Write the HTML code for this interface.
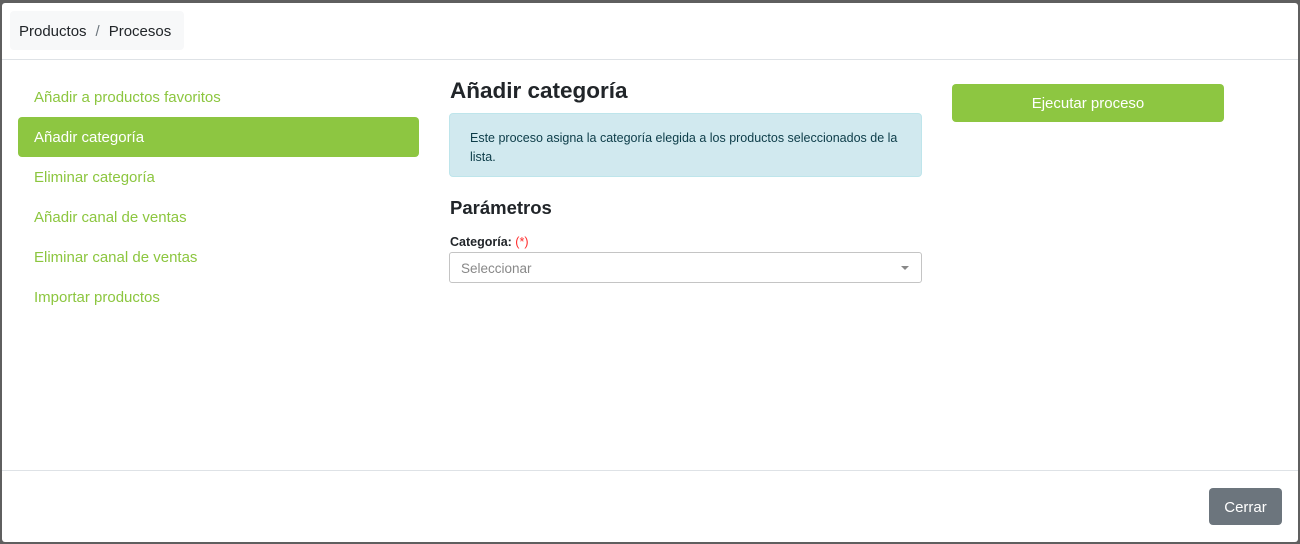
<!DOCTYPE html>
<html><head><meta charset="utf-8"><style>
*{box-sizing:border-box;margin:0;padding:0}
body{width:1300px;height:544px;background:#5f5f5f;font-family:"Liberation Sans",sans-serif;position:relative;overflow:hidden}
.modal{position:absolute;left:2px;top:3px;width:1296px;height:539px;background:#fff;border-radius:3px}
.hdr{position:absolute;left:0;top:0;width:100%;height:57px;border-bottom:1px solid #dee2e6}
.bc{position:absolute;left:8px;top:8px;height:39px;width:174px;background:#f7f8f9;border-radius:4px;font-size:15px;color:#212529;line-height:42px;padding-left:9px}
.bc span{color:#6c757d;margin:0 9px}
.nav{position:absolute;left:16px;top:74px;width:401px}
.nav div{height:40px;line-height:42px;padding-left:16px;font-size:15px;color:#8cc63f}
.nav div.act{background:#8dc641;color:#fff;border-radius:4px}
h2{position:absolute;left:448px;top:75px;font-size:22.5px;font-weight:bold;color:#212529}
.info{position:absolute;left:447px;top:110px;width:473px;height:64px;background:#d1e9ef;border:1px solid #bee5eb;border-radius:4px;font-size:12.5px;color:#0c3c48;padding:15px 20px;line-height:19px}
h3{position:absolute;left:448px;top:194px;font-size:18.5px;font-weight:bold;color:#212529}
.lbl{position:absolute;left:448px;top:232px;font-size:12.5px;font-weight:bold;color:#212529}
.lbl span{color:#ff2b2b;font-weight:normal}
.sel{position:absolute;left:447px;top:249px;width:473px;height:31px;border:1px solid #c4c4c4;border-radius:3px;font-size:13.5px;color:#888;line-height:32px;padding-left:11px}
.sel i{position:absolute;right:12px;top:13px;border-left:4px solid transparent;border-right:4px solid transparent;border-top:4px solid #888}
.run{position:absolute;left:950px;top:81px;width:272px;height:38px;background:#8dc641;border-radius:4px;color:#fff;font-size:15px;text-align:center;line-height:40px}
.ftr{position:absolute;left:0;top:467px;width:100%;border-top:1px solid #dee2e6}
.close{position:absolute;left:1207px;top:485px;width:73px;height:37px;background:#6c757d;border-radius:4px;color:#fff;font-size:15px;text-align:center;line-height:39px}
</style></head><body>
<div class="modal">
<div class="hdr"><div class="bc">Productos<span>/</span>Procesos</div></div>
<div class="nav">
<div>Añadir a productos favoritos</div>
<div class="act">Añadir categoría</div>
<div>Eliminar categoría</div>
<div>Añadir canal de ventas</div>
<div>Eliminar canal de ventas</div>
<div>Importar productos</div>
</div>
<h2>Añadir categoría</h2>
<div class="info">Este proceso asigna la categoría elegida a los productos seleccionados de la lista.</div>
<h3>Parámetros</h3>
<div class="lbl">Categoría: <span>(*)</span></div>
<div class="sel">Seleccionar<i></i></div>
<div class="run">Ejecutar proceso</div>
<div class="ftr"></div>
<div class="close">Cerrar</div>
</div>
</body></html>
